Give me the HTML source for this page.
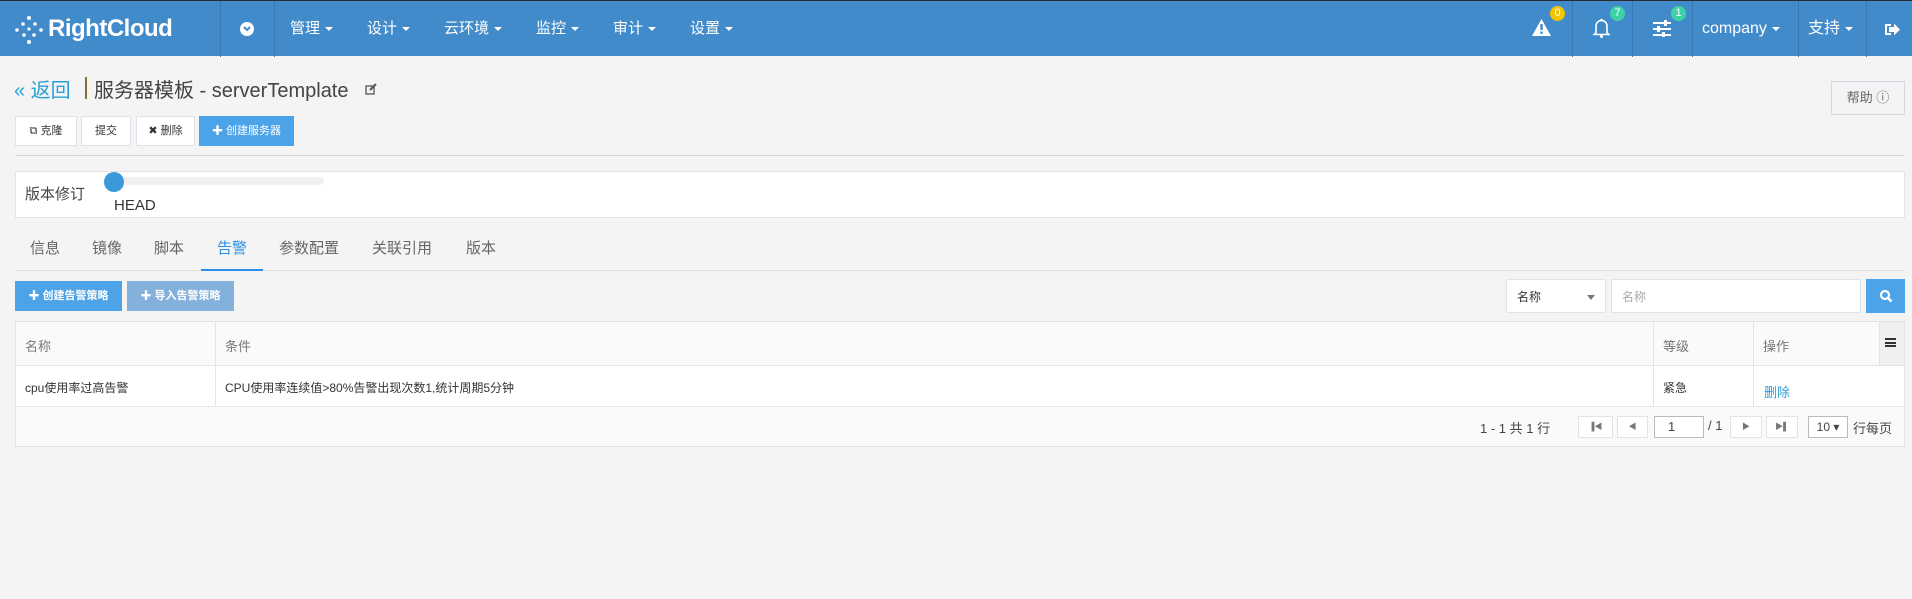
<!DOCTYPE html>
<html><head><meta charset="utf-8">
<style>
*{box-sizing:border-box;margin:0;padding:0}
body{width:1912px;height:599px;background:#f4f4f4;font-family:"Liberation Sans","Noto Sans CJK SC",sans-serif;position:relative;overflow:hidden;color:#333}
.a{position:absolute;white-space:nowrap}
.nav{position:absolute;left:0;top:0;width:1912px;height:56px;background:#428bca;border-top:1px solid #2a2a2a}
.nav .t{position:absolute;top:0;line-height:56px;height:56px;color:#fff;font-size:15px}
.car{display:inline-block;width:0;height:0;border-left:4px solid transparent;border-right:4px solid transparent;border-top:4px solid #fff;vertical-align:middle;margin-left:5px}
.vd{position:absolute;top:0;width:1px;height:56px;background:#3878b3}
.badge{position:absolute;width:15px;height:15px;border-radius:50%;color:#fff;font-size:11px;text-align:center;line-height:15px;top:5px}
.btn{position:absolute;height:30px;border:1px solid #dde2ea;background:#fff;font-size:11px;line-height:28px;text-align:center;color:#333}
.tab{position:absolute;top:237px;font-size:15px;color:#666}
.tb{position:absolute;background:#fff;border:1px solid #e2e2e2}
.cell{position:absolute;font-size:12px}
.pb{position:absolute;top:416px;height:22px;border:1px solid #e3e3e3;background:#fff;font-size:8px;color:#777;text-align:center;line-height:20px}
</style></head><body>
<div class="nav">
  <svg class="a" style="left:15px;top:14px" width="28" height="30" viewBox="0 0 28 30" fill="#fff">
    <circle cx="14" cy="3" r="2"/><circle cx="8" cy="9" r="1.8"/><circle cx="20" cy="9" r="1.8"/><circle cx="2" cy="15" r="1.8"/><circle cx="14" cy="14" r="1.6"/><circle cx="26" cy="15" r="1.8"/><circle cx="9" cy="20" r="1.8"/><circle cx="19" cy="20" r="1.8"/><circle cx="14" cy="27" r="2"/>
  </svg>
  <div class="a" style="left:48px;top:0;line-height:56px;color:#fff;font-size:24px;font-weight:bold;letter-spacing:-0.5px">RightCloud</div>
  <div class="vd" style="left:220px"></div>
  <div class="a" style="left:240px;top:21px;width:14px;height:14px;border-radius:50%;background:#fff"></div>
  <svg class="a" style="left:243px;top:25px" width="8" height="6"><path d="M1 1 L4 4 L7 1" stroke="#428bca" stroke-width="2" fill="none"/></svg>
  <div class="vd" style="left:274px"></div>
  <div class="t" style="left:290px">管理<span class="car"></span></div>
  <div class="t" style="left:367px">设计<span class="car"></span></div>
  <div class="t" style="left:444px">云环境<span class="car"></span></div>
  <div class="t" style="left:536px">监控<span class="car"></span></div>
  <div class="t" style="left:613px">审计<span class="car"></span></div>
  <div class="t" style="left:690px">设置<span class="car"></span></div>
  <svg class="a" style="left:1532px;top:18px" width="19" height="17"><path d="M9.5 0 L19 17 L0 17Z" fill="#fff"/><rect x="8.3" y="5" width="2.4" height="6" fill="#428bca"/><rect x="8.3" y="12.5" width="2.4" height="2.4" fill="#428bca"/></svg>
  <div class="badge" style="left:1550px;background:#f5c400">0</div>
  <div class="vd" style="left:1572px"></div>
  <svg class="a" style="left:1593px;top:17px" width="17" height="20"><path d="M3 15 L3 8 A5.5 5.5 0 0 1 14 8 L14 15 L16 16.5 L1 16.5 Z" fill="none" stroke="#fff" stroke-width="1.6"/><circle cx="8.5" cy="18.5" r="1.5" fill="#fff"/><circle cx="8.5" cy="2" r="1.2" fill="#fff"/></svg>
  <div class="badge" style="left:1610px;background:#3fd2a8">7</div>
  <div class="vd" style="left:1632px"></div>
  <svg class="a" style="left:1653px;top:19px" width="18" height="17" fill="#fff"><rect y="2" width="18" height="2"/><rect y="8" width="18" height="2"/><rect y="14" width="18" height="2"/><rect x="11" y="0" width="3" height="6"/><rect x="4" y="6" width="3" height="6"/><rect x="9" y="12" width="3" height="5"/></svg>
  <div class="badge" style="left:1671px;background:#3fd2a8">1</div>
  <div class="vd" style="left:1692px"></div>
  <div class="t" style="left:1702px;font-size:16px">company<span class="car"></span></div>
  <div class="vd" style="left:1798px"></div>
  <div class="t" style="left:1808px;font-size:16px">支持<span class="car"></span></div>
  <div class="vd" style="left:1866px"></div>
  <svg class="a" style="left:1885px;top:22px" width="15" height="13" fill="#fff"><path d="M0 1 H6 V3 H2 V10 H6 V12 H0Z"/><path d="M4 4 H9 V0.5 L15 6.5 L9 12.5 V9 H4Z"/></svg>
</div>

<div class="a" style="left:14px;top:74px;font-size:20px;color:#2a9fd6">« 返回</div>
<div class="a" style="left:85px;top:77px;width:2px;height:22px;background:#8a6a3a"></div>
<div class="a" style="left:94px;top:74px;font-size:20px;color:#444">服务器模板 - serverTemplate</div>
<svg class="a" style="left:365px;top:83px" width="12" height="12"><rect x="1" y="3" width="8" height="8" fill="none" stroke="#555" stroke-width="1.3"/><path d="M5 7 L11 1" stroke="#555" stroke-width="2"/></svg>
<div class="btn" style="left:1831px;top:81px;width:74px;height:34px;line-height:32px;background:#f3f3f6;color:#666;font-size:13px;border-color:#d5d8e0">帮助 ⓘ</div>

<div class="btn" style="left:15px;top:116px;width:62px">⧉ 克隆</div>
<div class="btn" style="left:81px;top:116px;width:50px">提交</div>
<div class="btn" style="left:136px;top:116px;width:59px">✖ 删除</div>
<div class="btn" style="left:199px;top:116px;width:95px;background:#4da3e8;border-color:#4da3e8;color:#fff">✚ 创建服务器</div>
<div class="a" style="left:15px;top:155px;width:1890px;height:1px;background:#d8d8d8"></div>

<div class="tb" style="left:15px;top:171px;width:1890px;height:47px"></div>
<div class="a" style="left:25px;top:183px;font-size:15px;color:#444">版本修订</div>
<div class="a" style="left:112px;top:177px;width:212px;height:8px;border-radius:4px;background:#f0f0f0"></div>
<div class="a" style="left:104px;top:172px;width:20px;height:20px;border-radius:50%;background:#3a9ad9"></div>
<div class="a" style="left:114px;top:197px;font-size:15px;color:#333">HEAD</div>

<div class="tab" style="left:30px">信息</div>
<div class="tab" style="left:92px">镜像</div>
<div class="tab" style="left:154px">脚本</div>
<div class="tab" style="left:217px;color:#2a8fe6">告警</div>
<div class="tab" style="left:279px">参数配置</div>
<div class="tab" style="left:372px">关联引用</div>
<div class="tab" style="left:466px">版本</div>
<div class="a" style="left:15px;top:270px;width:1890px;height:1px;background:#ddd"></div>
<div class="a" style="left:201px;top:269px;width:62px;height:2px;background:#2a8fe6"></div>

<div class="btn" style="left:15px;top:281px;width:107px;background:#4da3e8;border-color:#4da3e8;color:#fff;font-weight:bold">✚ 创建告警策略</div>
<div class="btn" style="left:127px;top:281px;width:107px;background:#84b0dc;border-color:#84b0dc;color:#fff;font-weight:bold">✚ 导入告警策略</div>

<div class="tb" style="left:1506px;top:279px;width:100px;height:34px;border-color:#dde4ee"></div>
<div class="a" style="left:1517px;top:288px;font-size:12px">名称</div>
<div class="a" style="left:1587px;top:295px;border-left:4px solid transparent;border-right:4px solid transparent;border-top:5px solid #777"></div>
<div class="tb" style="left:1611px;top:279px;width:250px;height:34px;border-color:#dde4ee"></div>
<div class="a" style="left:1622px;top:288px;font-size:12px;color:#aaa">名称</div>
<div class="a" style="left:1866px;top:279px;width:39px;height:34px;background:#4da3e8"></div>
<svg class="a" style="left:1879px;top:289px" width="14" height="14"><circle cx="6" cy="6" r="4" fill="none" stroke="#fff" stroke-width="2.2"/><path d="M9 9 L12.5 12.5" stroke="#fff" stroke-width="2.6"/></svg>

<div class="tb" style="left:15px;top:321px;width:1890px;height:126px;background:#fafafa"></div>
<div class="a" style="left:16px;top:365px;width:1888px;height:42px;background:#fff;border-top:1px solid #e5e5e5;border-bottom:1px solid #e5e5e5"></div>
<div class="a" style="left:1879px;top:322px;width:25px;height:43px;background:#f0f0f0;border-left:1px solid #e5e5e5"></div>
<div class="a" style="left:215px;top:322px;width:1px;height:85px;background:#e5e5e5"></div>
<div class="a" style="left:1653px;top:322px;width:1px;height:85px;background:#e5e5e5"></div>
<div class="a" style="left:1753px;top:322px;width:1px;height:85px;background:#e5e5e5"></div>
<div class="cell a" style="left:25px;top:336px;color:#777;font-size:13px">名称</div>
<div class="cell a" style="left:225px;top:336px;color:#777;font-size:13px">条件</div>
<div class="cell a" style="left:1663px;top:336px;color:#777;font-size:13px">等级</div>
<div class="cell a" style="left:1763px;top:336px;color:#777;font-size:13px">操作</div>
<div class="a" style="left:1885px;top:338px;width:11px;height:9px;border-top:2px solid #333;border-bottom:2px solid #333"></div>
<div class="a" style="left:1885px;top:342px;width:11px;height:2px;background:#333"></div>
<div class="cell a" style="left:25px;top:379px">cpu使用率过高告警</div>
<div class="cell a" style="left:225px;top:379px">CPU使用率连续值&gt;80%告警出现次数1,统计周期5分钟</div>
<div class="cell a" style="left:1663px;top:379px">紧急</div>
<div class="cell a" style="left:1764px;top:382px;color:#2a9fd6;font-size:13px">删除</div>

<div class="a" style="left:1480px;top:418px;font-size:13px;color:#444">1 - 1 共 1 行</div>
<div class="pb" style="left:1578px;width:35px">▐◀</div>
<div class="pb" style="left:1617px;width:31px">◀</div>
<div class="pb" style="left:1654px;width:50px;border-color:#bbb;font-size:13px;color:#444;text-align:left;padding-left:13px">1</div>
<div class="a" style="left:1708px;top:418px;font-size:13px;color:#444">/ 1</div>
<div class="pb" style="left:1730px;width:32px">▶</div>
<div class="pb" style="left:1766px;width:32px">▶▌</div>
<div class="pb" style="left:1808px;width:40px;border-color:#bbb;font-size:12px;color:#444">10 ▾</div>
<div class="a" style="left:1853px;top:418px;font-size:13px;color:#444">行每页</div>
</body></html>
